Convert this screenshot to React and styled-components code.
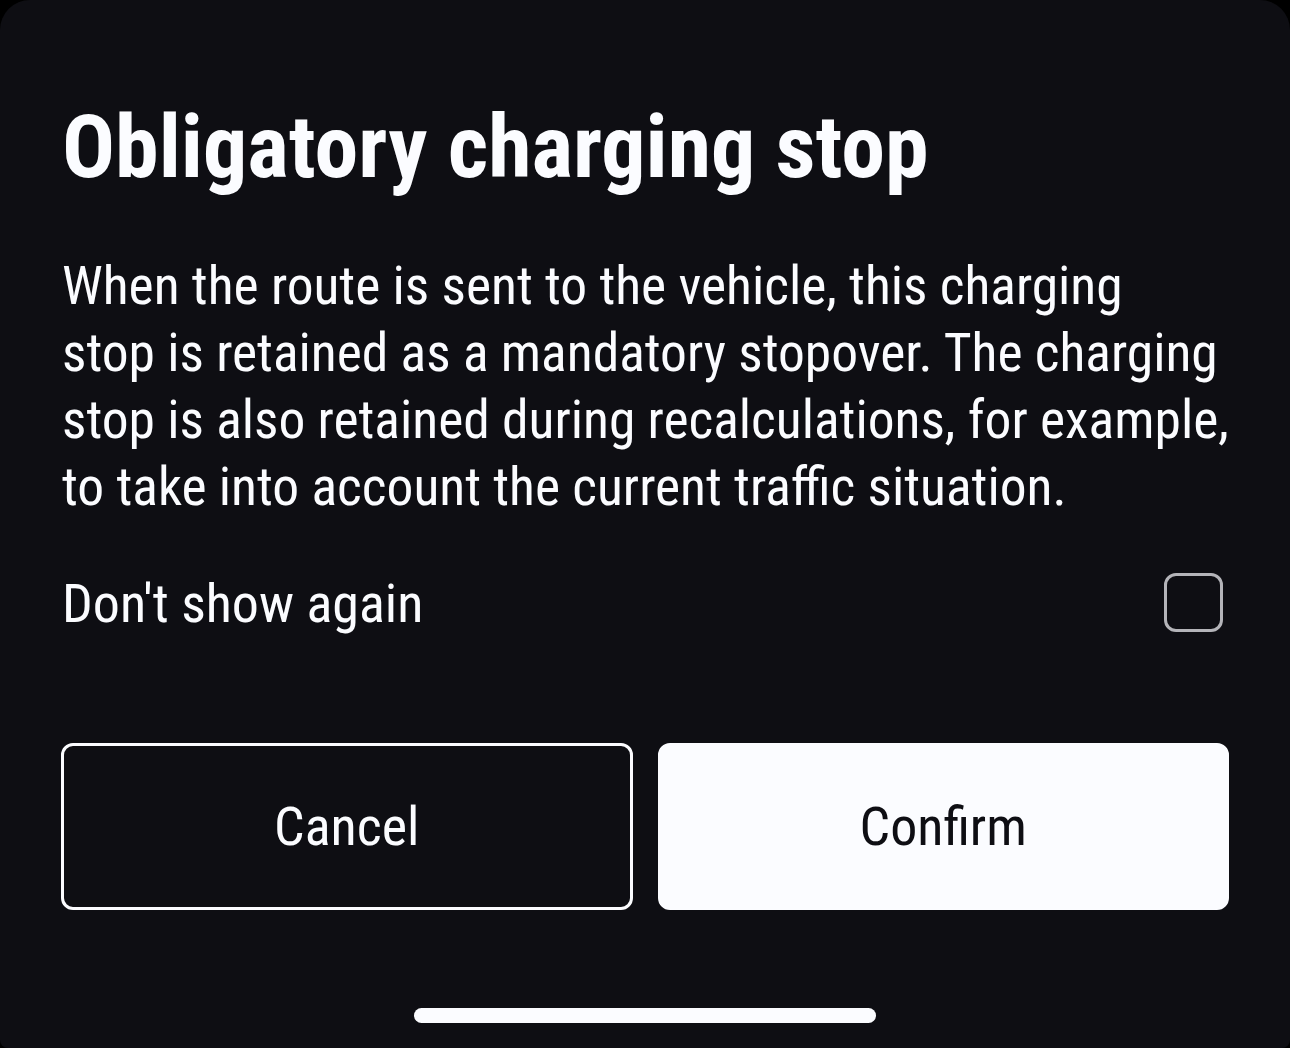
import React, { useState } from "react";
import styled, { createGlobalStyle } from "styled-components";

const GlobalStyle = createGlobalStyle`
  html, body { margin: 0; padding: 0; background: #000; }
  body { font-family: "Roboto Condensed", "Roboto", sans-serif; -webkit-font-smoothing: antialiased; }
  * { box-sizing: border-box; }
`;

const Sheet = styled.div`
  width: 1290px;
  height: 1048px;
  background: #0e0e13;
  border-radius: 30px 30px 8px 8px;
  padding: 95px 61px 0 61px;
  display: flex;
  flex-direction: column;
  color: #fbfcff;
`;

const Title = styled.h1`
  margin: 0 0 54px 1px;
  font-size: 88px;
  line-height: 103px;
  font-weight: 700;
  letter-spacing: 0;
`;

const Body = styled.p`
  margin: 0 0 48px 1px;
  font-size: 53.5px;
  line-height: 67px;
  font-weight: 400;
`;

const Line = styled.span`
  display: block;
  white-space: nowrap;
`;

const OptionRow = styled.label`
  display: flex;
  align-items: center;
  justify-content: space-between;
  height: 68px;
  padding: 0 6px 0 1px;
  margin-bottom: 107px;
  cursor: pointer;
`;

const OptionText = styled.span`
  font-size: 54px;
  line-height: 68px;
  padding-top: 4px;
`;

const Checkbox = styled.span`
  width: 59px;
  height: 59px;
  border: 3px solid #b4b4b9;
  border-radius: 12px;
  background: ${(p) => (p.$checked ? "#fbfcff" : "transparent")};
`;

const Buttons = styled.div`
  display: grid;
  grid-template-columns: 1fr 1fr;
  gap: 25px;
`;

const Button = styled.button`
  height: 167px;
  border-radius: 12px;
  border: 3px solid #fbfcff;
  background: ${(p) => (p.$primary ? "#fbfcff" : "transparent")};
  color: ${(p) => (p.$primary ? "#0e0e13" : "#fbfcff")};
  font-family: "Roboto Condensed", "Roboto", sans-serif;
  font-size: 54px;
  font-weight: 400;
  cursor: pointer;
`;

const HomeBar = styled.div`
  align-self: center;
  width: 462px;
  height: 15px;
  border-radius: 8px;
  background: #fbfcff;
  margin-top: 98px;
`;

const lines = [
  "When the route is sent to the vehicle, this charging",
  "stop is retained as a mandatory stopover. The charging",
  "stop is also retained during recalculations, for example,",
  "to take into account the current traffic situation.",
];

export default function App() {
  const [checked, setChecked] = useState(false);
  return (
    <>
      <GlobalStyle />
      <Sheet>
        <Title>Obligatory charging stop</Title>
        <Body>
          {lines.map((l) => (
            <Line key={l}>{l}</Line>
          ))}
        </Body>
        <OptionRow onClick={() => setChecked((c) => !c)}>
          <OptionText>Don't show again</OptionText>
          <Checkbox $checked={checked} />
        </OptionRow>
        <Buttons>
          <Button>Cancel</Button>
          <Button $primary>Confirm</Button>
        </Buttons>
        <HomeBar />
      </Sheet>
    </>
  );
}
